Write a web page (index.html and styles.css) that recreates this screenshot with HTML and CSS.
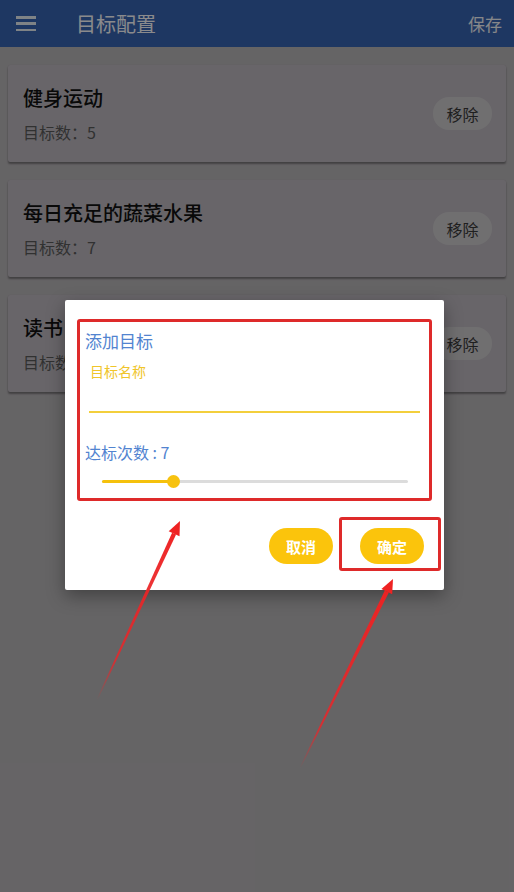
FILE: index.html
```html
<!DOCTYPE html>
<html lang="zh-CN">
<head>
<meta charset="utf-8">
<title>目标配置</title>
<link rel="stylesheet" href="styles.css">
</head>
<body>
<div class="screen">
  <header class="appbar">
    <span class="menu-icon"><i></i><i></i><i></i></span>
    <h1 class="appbar-title">目标配置</h1>
    <span class="appbar-action">保存</span>
  </header>

  <main class="goal-list">
    <section class="goal-card">
      <div class="goal-info">
        <div class="goal-name">健身运动</div>
        <div class="goal-count">目标数：5</div>
      </div>
      <button class="remove-btn">移除</button>
    </section>
    <section class="goal-card">
      <div class="goal-info">
        <div class="goal-name">每日充足的蔬菜水果</div>
        <div class="goal-count">目标数：7</div>
      </div>
      <button class="remove-btn">移除</button>
    </section>
    <section class="goal-card">
      <div class="goal-info">
        <div class="goal-name">读书</div>
        <div class="goal-count">目标数：3</div>
      </div>
      <button class="remove-btn">移除</button>
    </section>
  </main>

  <div class="scrim"></div>

  <div class="dialog">
    <div class="dialog-title">添加目标</div>
    <div class="field">
      <label class="field-label">目标名称</label>
      <div class="field-input"></div>
    </div>
    <div class="count-label">达标次数 : 7</div>
    <div class="slider">
      <div class="slider-track">
        <div class="slider-fill" style="width: 23.5%"></div>
      </div>
      <div class="slider-thumb" style="left: 23.5%"></div>
    </div>
    <div class="dialog-actions">
      <button class="pill-btn">取消</button>
      <button class="pill-btn">确定</button>
    </div>

    <div class="mark mark-form"></div>
    <div class="mark mark-ok"></div>
  </div>

  <svg class="pointers" width="514" height="892" viewBox="0 0 514 892">
    <defs>
      <linearGradient id="fadeA" gradientUnits="userSpaceOnUse" x1="97" y1="700" x2="180" y2="521">
        <stop offset="0" stop-color="#e8262a" stop-opacity="0"/>
        <stop offset="0.22" stop-color="#e8262a" stop-opacity="0.85"/>
        <stop offset="1" stop-color="#ee2222"/>
      </linearGradient>
      <linearGradient id="fadeB" gradientUnits="userSpaceOnUse" x1="300" y1="768" x2="393" y2="579">
        <stop offset="0" stop-color="#e8262a" stop-opacity="0"/>
        <stop offset="0.22" stop-color="#e8262a" stop-opacity="0.85"/>
        <stop offset="1" stop-color="#ee2222"/>
      </linearGradient>
    </defs>
    <!-- pointer to the form -->
    <polygon fill="url(#fadeA)" points="176.1,534.6 172.1,532.8 96.5,699.7 97.5,700.3"/>
    <polygon fill="#ee2222" points="180,521 179.5,536.2 168.7,531.2"/>
    <!-- pointer to the confirm button -->
    <polygon fill="url(#fadeB)" points="388.8,592.6 384.8,590.6 299.5,767.7 300.5,768.3"/>
    <polygon fill="#ee2222" points="393,579 392.2,594.3 381.4,589.0"/>
  </svg>
</div>
</body>
</html>
```

FILE: styles.css
```css
* {
  box-sizing: border-box;
}

html, body {
  margin: 0;
  padding: 0;
}

body {
  font-family: "Noto Sans CJK SC", "Noto Sans", Roboto, sans-serif;
  background: #b8b8b8;
}

.screen {
  position: relative;
  width: 514px;
  height: 892px;
  overflow: hidden;
  background: #b9b6b9;
}

/* top app bar */
.appbar {
  height: 47px;
  display: flex;
  align-items: center;
  padding: 0 12px 0 16px;
  background: #3764b2;
  color: #ffffff;
}

.menu-icon {
  width: 20px;
  height: 15px;
  display: flex;
  flex-direction: column;
  justify-content: space-between;
}

.menu-icon i {
  display: block;
  height: 2.5px;
  background: #e8eef5;
}

.appbar-title {
  margin: 0 0 0 40px;
  font-size: 20px;
  font-weight: 400;
  line-height: 28px;
  flex: 1;
  color: #fbfcff;
}

.appbar-action {
  font-size: 17px;
  line-height: 24px;
  color: #f4f6fa;
}

/* goal cards */
.goal-list {
  display: flex;
  flex-direction: column;
  gap: 18px;
  padding: 18px 8px 0;
}

.goal-card {
  height: 97px;
  display: flex;
  align-items: center;
  justify-content: space-between;
  padding: 0 14px 0 15px;
  background: #bdb9bf;
  border-radius: 2px;
  box-shadow: 0 2px 2px rgba(0, 0, 0, 0.35), 0 0 1px rgba(0, 0, 0, 0.12);
}

.goal-info {
  display: flex;
  flex-direction: column;
  gap: 9px;
}

.goal-name {
  font-size: 20px;
  font-weight: 500;
  line-height: 28px;
  color: #111111;
}

.goal-count {
  font-size: 16px;
  line-height: 22px;
  color: #5a5a5a;
}

.remove-btn {
  width: 59px;
  height: 33px;
  border: 0;
  border-radius: 16px;
  background: #cdcacd;
  color: #3a3a3a;
  font-family: inherit;
  font-size: 16px;
  padding: 0;
}

/* dim layer behind the dialog */
.scrim {
  position: absolute;
  inset: 0;
  background: rgba(0, 0, 0, 0.45);
}

/* add-goal dialog */
.dialog {
  position: absolute;
  left: 65px;
  top: 300px;
  width: 379px;
  height: 290px;
  padding: 29px 20px 26px;
  background: #ffffff;
  border-radius: 2px;
  box-shadow: 0 6px 18px rgba(0, 0, 0, 0.35);
  display: flex;
  flex-direction: column;
}

.dialog-title {
  font-size: 17px;
  line-height: 24px;
  color: #5284d0;
}

.field {
  margin: 8px 4px 0;
}

.field-label {
  display: block;
  padding-left: 1px;
  font-size: 14px;
  line-height: 20px;
  color: #f0c52a;
}

.field-input {
  height: 32px;
  border-bottom: 2px solid #f3cf3c;
}

.count-label {
  margin-top: 28px;
  font-size: 16px;
  line-height: 22px;
  color: #5284d0;
}

.slider {
  position: relative;
  height: 16px;
  margin: 10px 16px 0 17px;
}

.slider-track {
  position: absolute;
  left: 0;
  right: 0;
  top: 6.5px;
  height: 3px;
  border-radius: 2px;
  background: #dcdcdc;
}

.slider-fill {
  height: 100%;
  border-radius: 2px;
  background: #f5c10c;
}

.slider-thumb {
  position: absolute;
  top: 1.5px;
  width: 13px;
  height: 13px;
  margin-left: -6.5px;
  border-radius: 50%;
  background: #f7c20f;
}

.dialog-actions {
  margin-top: 39px;
  display: flex;
  justify-content: flex-end;
  gap: 27px;
}

.pill-btn {
  width: 64px;
  height: 36px;
  border: 0;
  border-radius: 18px;
  background: #fbc40c;
  color: #ffffff;
  font-family: inherit;
  font-size: 15px;
  font-weight: 700;
  padding: 0;
}

/* red callout frames */
.mark {
  position: absolute;
  border: 3px solid #de2a2a;
  border-radius: 3px;
}

.mark-form {
  left: 12px;
  top: 19px;
  width: 355px;
  height: 182px;
}

.mark-ok {
  left: 274px;
  top: 217px;
  width: 102px;
  height: 54px;
}

.pointers {
  position: absolute;
  left: 0;
  top: 0;
}
```
